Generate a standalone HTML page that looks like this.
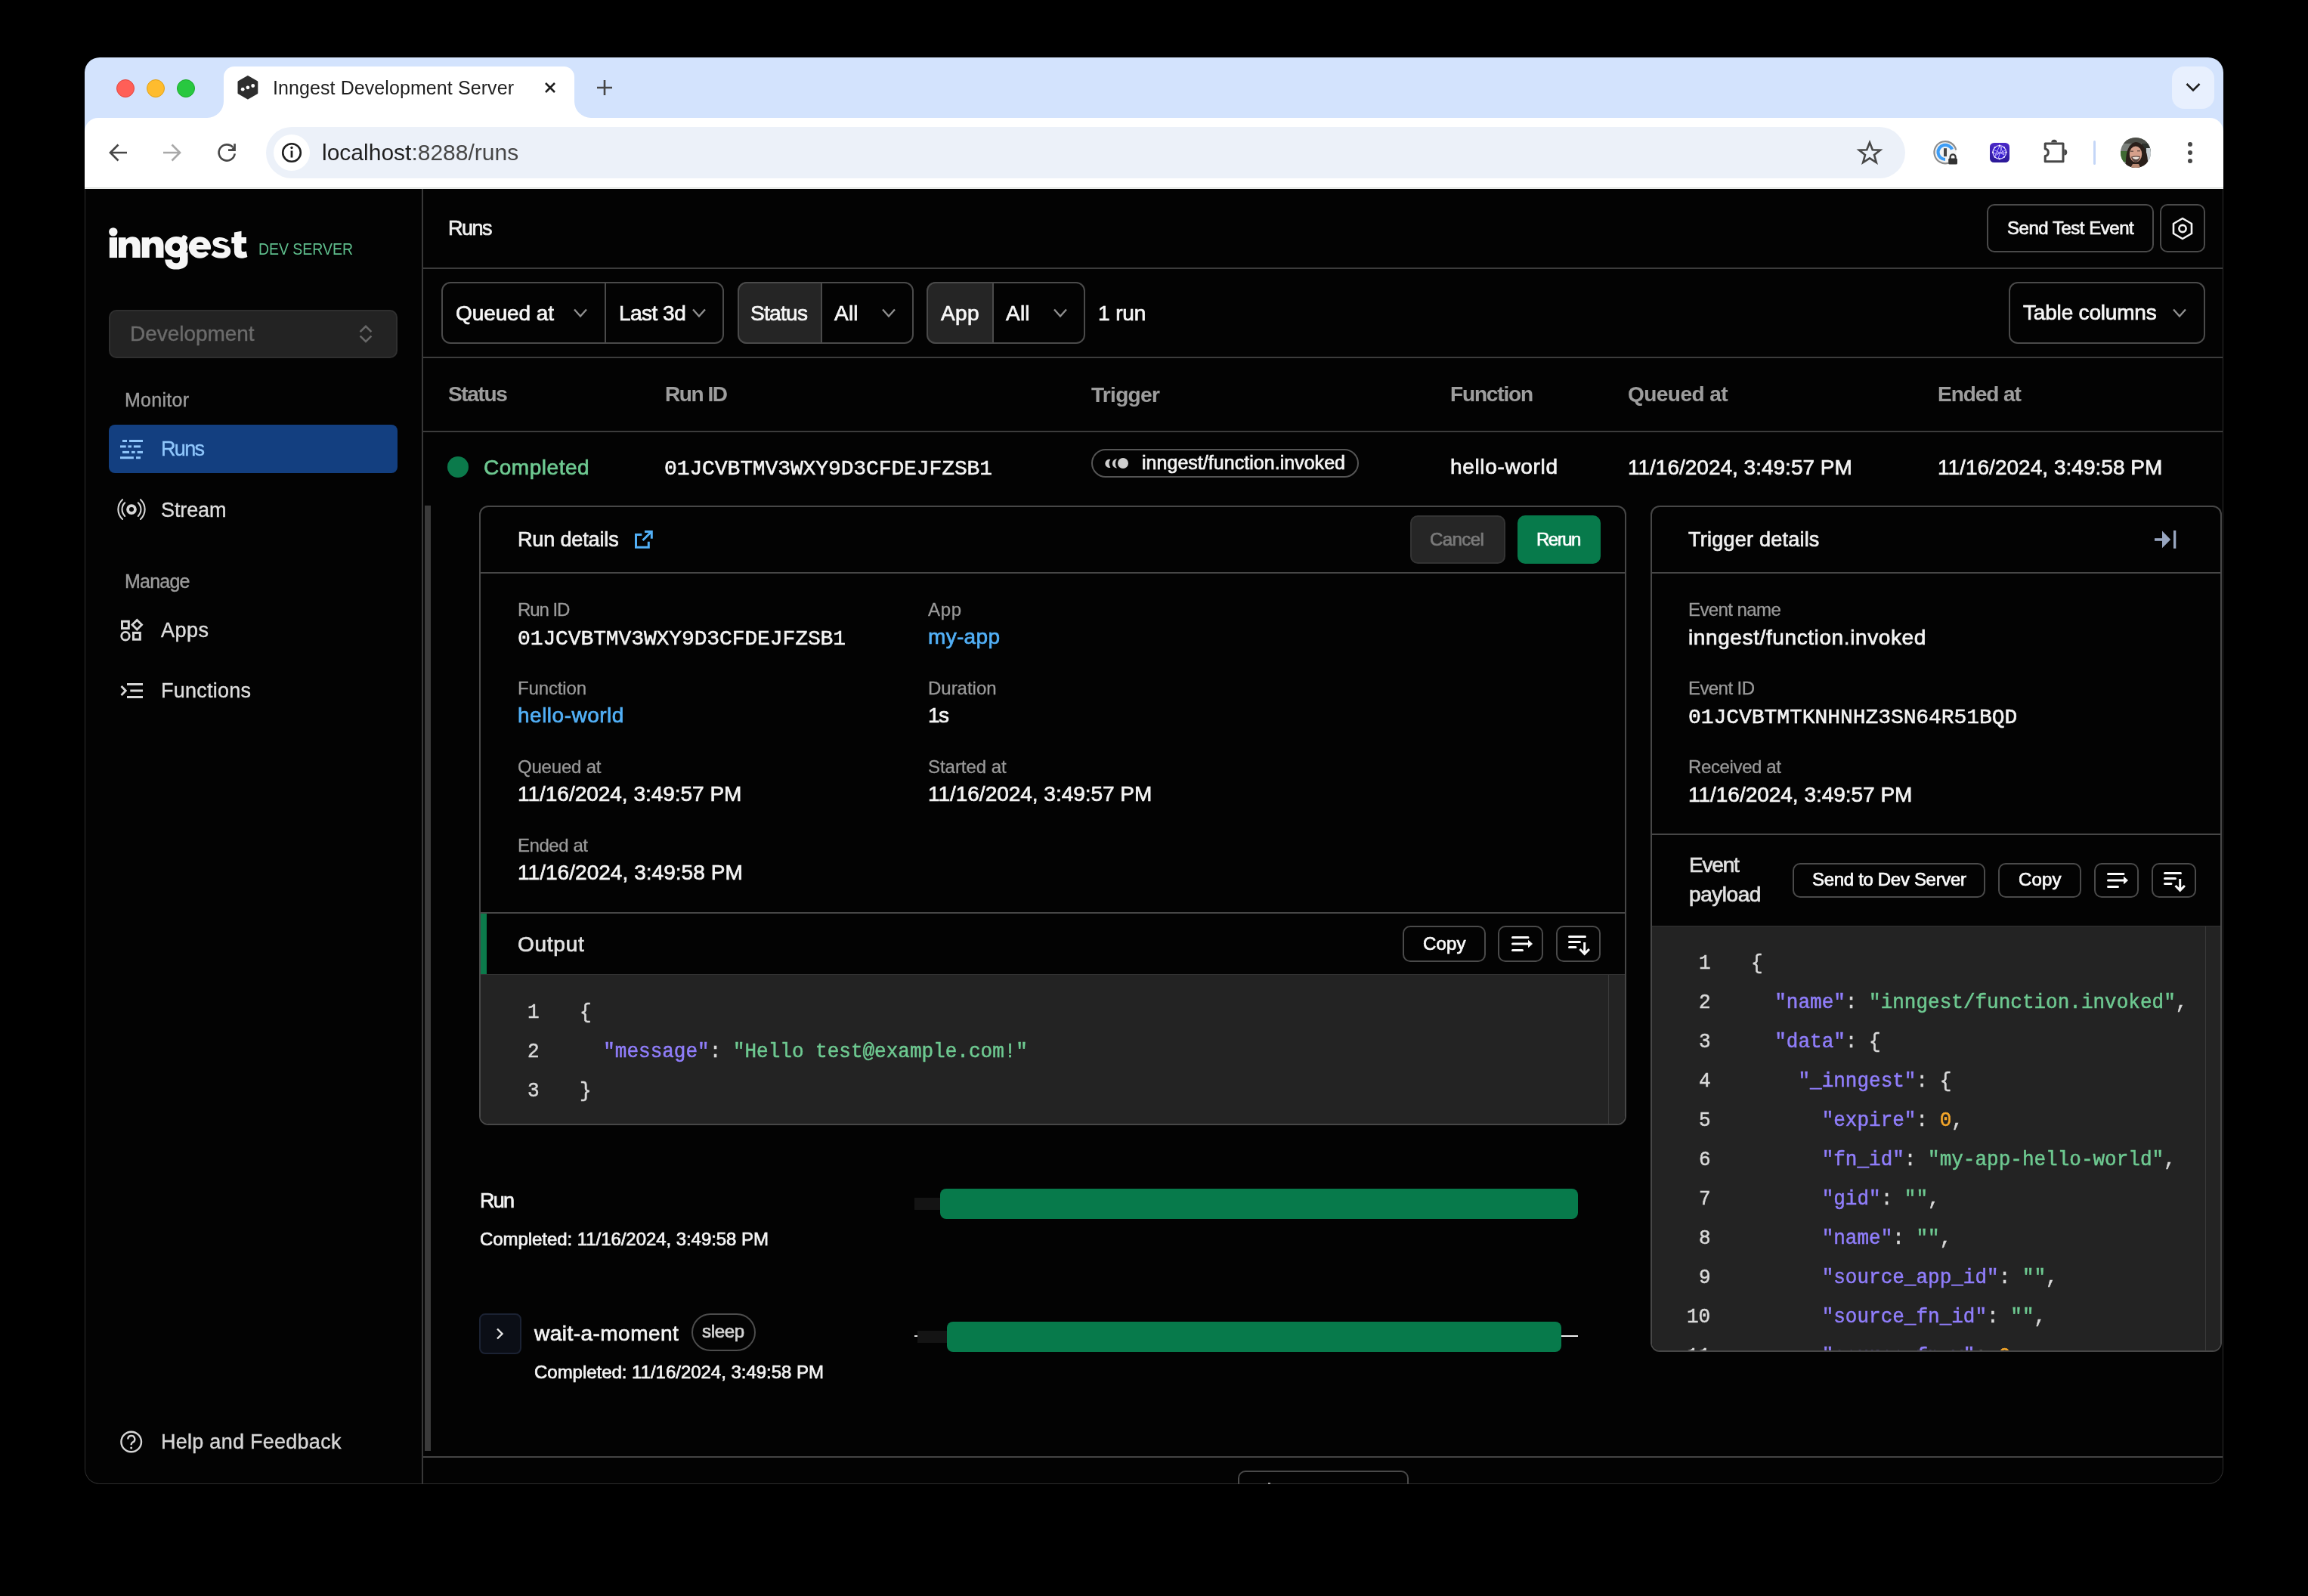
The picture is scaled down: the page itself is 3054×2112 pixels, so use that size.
<!DOCTYPE html>
<html><head><meta charset="utf-8"><title>Inngest Development Server</title>
<style>
html,body{margin:0;padding:0;}
body{width:3054px;height:2112px;background:#000;overflow:hidden;position:relative;font-family:"Liberation Sans",sans-serif;}
.t{position:absolute;white-space:pre;will-change:transform;}
.b{position:absolute;}
</style></head><body>
<div class="b" style="left:112px;top:76px;width:2830px;height:1888px;background:#030303;border-radius:20px;overflow:hidden;"></div>
<div class="b" style="left:112px;top:240px;width:2830px;height:1724px;border:1px solid #2c2c2c;box-sizing:border-box;border-radius:0 0 20px 20px;border-top:none;"></div>
<div class="b" style="left:112px;top:76px;width:2830px;height:114px;background:#d3e3fd;border-radius:20px 20px 0 0;"></div>
<div class="b" style="left:112px;top:156px;width:2830px;height:94px;background:#ffffff;border-radius:18px 18px 0 0;"></div>
<div class="b" style="left:112px;top:248px;width:2830px;height:1px;background:#dcdedc;"></div>
<div class="b" style="left:112px;top:249px;width:2830px;height:1px;background:#eceeec;"></div>
<div class="b" style="left:296px;top:88px;width:464px;height:72px;background:#ffffff;border-radius:14px 14px 0 0;"></div>
<div class="b" style="left:274px;top:134px;width:22px;height:26px;background:#ffffff;"></div>
<div class="b" style="left:230px;top:100px;width:66px;height:56px;background:#d3e3fd;border-radius:0 0 22px 0;"></div>
<div class="b" style="left:760px;top:134px;width:22px;height:26px;background:#ffffff;"></div>
<div class="b" style="left:760px;top:100px;width:66px;height:56px;background:#d3e3fd;border-radius:0 0 0 22px;"></div>
<div class="b" style="left:154px;top:105px;width:24px;height:24px;background:#ff5f57;border:1px solid #e2463f;box-sizing:border-box;border-radius:12px;"></div>
<div class="b" style="left:194px;top:105px;width:24px;height:24px;background:#febc2e;border:1px solid #e1a116;box-sizing:border-box;border-radius:12px;"></div>
<div class="b" style="left:234px;top:105px;width:24px;height:24px;background:#28c840;border:1px solid #1aab29;box-sizing:border-box;border-radius:12px;"></div>
<svg class="b" style="left:310px;top:96px;" width="36" height="40" viewBox="310 96 36 40">
      <polygon points="327.9,101.3 340.1,108.4 340.1,123.2 327.9,130.2 315.7,123.2 315.7,108.4" fill="#2e2e2e" stroke="#2e2e2e" stroke-width="2.4" stroke-linejoin="round"/>
      <circle cx="321.2" cy="118.2" r="2.4" fill="#fff"/><circle cx="327.9" cy="115.8" r="2.4" fill="#fff"/><circle cx="334.7" cy="113.5" r="2.4" fill="#fff"/>
    </svg>
<div class="t" style="left:361.00px;top:103.75px;font-size:25px;line-height:25px;color:#1f1f1f;letter-spacing:0.085px;">Inngest Development Server</div>
<svg class="b" style="left:716px;top:104px;" width="24" height="24" viewBox="716 104 24 24"><path d="M722 110 L734 122 M734 110 L722 122" stroke="#1f1f1f" stroke-width="2.6" stroke-linecap="butt"/></svg>
<svg class="b" style="left:786px;top:102px;" width="28" height="28" viewBox="786 102 28 28"><path d="M800 106 L800 126 M790 116 L810 116" stroke="#474747" stroke-width="2.6"/></svg>
<div class="b" style="left:2874px;top:88px;width:56px;height:56px;background:#e8f0fe;border-radius:16px;"></div>
<svg class="b" style="left:2890px;top:106px;" width="24" height="18" viewBox="2890 106 24 18"><path d="M2893.5 111 L2902 119.5 L2910.5 111" fill="none" stroke="#1f1f1f" stroke-width="2.6"/></svg>
<svg class="b" style="left:140px;top:186px;" width="32" height="32" viewBox="140 186 32 32"><path d="M168 202 L146 202 M156.5 191.5 L146 202 L156.5 212.5" fill="none" stroke="#474747" stroke-width="2.7"/></svg>
<svg class="b" style="left:212px;top:186px;" width="32" height="32" viewBox="212 186 32 32"><path d="M216 202 L238 202 M227.5 191.5 L238 202 L227.5 212.5" fill="none" stroke="#a9a9a9" stroke-width="2.7"/></svg>
<svg class="b" style="left:284px;top:186px;" width="34" height="32" viewBox="284 186 34 32"><path d="M308.2 195 A10.6 10.6 0 1 0 310.7 203.4" fill="none" stroke="#474747" stroke-width="2.6"/><polygon points="302,197.2 306.3,197.2 309.2,194.3 309.2,190.3 311.9,190.3 311.9,199.9 302,199.9" fill="#474747"/></svg>
<div class="b" style="left:352px;top:168px;width:2169px;height:68px;background:#ecf1f9;border-radius:34px;"></div>
<div class="b" style="left:362px;top:178px;width:48px;height:48px;background:#ffffff;border-radius:24px;"></div>
<svg class="b" style="left:370px;top:188px;" width="32" height="28" viewBox="370 188 32 28"><circle cx="386" cy="202" r="11.8" fill="none" stroke="#1f1f1f" stroke-width="2.6"/><path d="M386 199.5 L386 208.5" stroke="#1f1f1f" stroke-width="2.8"/><circle cx="386" cy="195.5" r="1.7" fill="#1f1f1f"/></svg>
<div class="t" style="left:426px;top:186.5px;font-size:30px;line-height:30px;color:#1f1f1f;letter-spacing:0px">localhost<span style="color:#474747">:8288/runs</span></div>
<svg class="b" style="left:2456px;top:184px;" width="36" height="34" viewBox="2456 184 36 34"><polygon points="2474,188.5 2477.8,198.2 2488,198.6 2480,205 2482.8,215 2474,209.3 2465.2,215 2468,205 2460,198.6 2470.2,198.2" fill="none" stroke="#474747" stroke-width="2.6" stroke-linejoin="miter"/></svg>
<svg class="b" style="left:2554px;top:182px;" width="42" height="40" viewBox="2554 182 42 40">
      <circle cx="2574" cy="201.5" r="14.6" fill="#f4f4f4"/>
      <path d="M2578.5 215.6 A14.6 14.6 0 1 1 2588.3 198.5" fill="none" stroke="#8c8c8c" stroke-width="2.2"/>
      <path d="M2574 211 A9.6 9.6 0 1 1 2583 197.8" fill="none" stroke="#3d9df6" stroke-width="4.2"/>
      <rect x="2572" y="196.2" width="4" height="10.8" fill="#474747"/>
      <path d="M2580.6 210.5 L2580.6 207.8 A3.5 3.5 0 0 1 2587.6 207.8 L2587.6 210.5" fill="none" stroke="#333" stroke-width="2.2"/>
      <rect x="2578.2" y="209.6" width="11.8" height="8" rx="1.6" fill="#333"/>
    </svg>
<svg class="b" style="left:2630px;top:186px;" width="32" height="32" viewBox="2630 186 32 32">
      <defs><linearGradient id="pg" x1="0" y1="0" x2="0" y2="1"><stop offset="0" stop-color="#4b28c8"/><stop offset="1" stop-color="#2a1896"/></linearGradient></defs>
      <rect x="2633" y="189" width="26" height="26" rx="5.5" fill="url(#pg)"/>
      <circle cx="2645.8" cy="201.5" r="8.8" fill="#3a20d0" stroke="#d8ccff" stroke-width="1.3"/>
      <path d="M2638 198 L2652 205 L2646 193 L2640 206 L2653 199 M2644 210 L2649 194 M2637.5 203 L2654 202" fill="none" stroke="#c9b8ff" stroke-width="0.9"/>
      <g fill="#ffffff"><circle cx="2645.8" cy="192.7" r="1.1"/><circle cx="2654.6" cy="201.5" r="1.1"/><circle cx="2645.8" cy="210.3" r="1.1"/><circle cx="2637" cy="201.5" r="1.1"/><circle cx="2652" cy="195.3" r="1"/><circle cx="2639.6" cy="207.7" r="1"/><circle cx="2652" cy="207.7" r="1"/><circle cx="2639.6" cy="195.3" r="1"/></g>
    </svg>
<svg class="b" style="left:2700px;top:180px;" width="40" height="40" viewBox="2700 180 40 40">
      <path d="M2706.2 190 L2730 190 L2730 213.8 L2706.2 213.8 L2706.2 206.5 A4.8 4.8 0 0 0 2706.2 197 Z" fill="none" stroke="#474747" stroke-width="3" stroke-linejoin="round"/>
      <path d="M2714.2 188.6 A3.9 3.9 0 0 1 2722 188.6 Z" fill="#474747"/>
      <path d="M2731.4 197.6 A3.9 3.9 0 0 1 2731.4 205.4 Z" fill="#474747"/>
    </svg>
<div class="b" style="left:2770px;top:186px;width:3px;height:32px;background:#c4d6f7;border-radius:1.5px;"></div>
<svg class="b" style="left:2804px;top:180px;" width="44" height="44" viewBox="2804 180 44 44">
      <defs><clipPath id="avc"><circle cx="2826" cy="202" r="20"/></clipPath></defs>
      <g clip-path="url(#avc)">
        <rect x="2804" y="180" width="44" height="44" fill="#7a7f7a"/>
        <rect x="2804" y="180" width="44" height="10" fill="#4c4e48"/>
        <rect x="2834" y="190" width="12" height="12" fill="#2e332e"/>
        <rect x="2804" y="200" width="12" height="14" fill="#3f6a33"/>
        <rect x="2814" y="204" width="3" height="10" fill="#dfe6ea"/>
        <rect x="2840" y="196" width="6" height="20" fill="#c9d0d4"/>
        <path d="M2813 222 C2812 205 2815 190 2826 188 C2837 189 2841 200 2842 213 L2841 222 Z" fill="#2a1f1a"/>
        <ellipse cx="2826" cy="204" rx="8.2" ry="10.5" fill="#d6a08b"/>
        <path d="M2822 217 L2830 217 L2833 224 L2818 224 Z" fill="#b98a73"/>
        <rect x="2819" y="199.5" width="4" height="1.4" fill="#6a5048"/>
        <rect x="2828" y="199" width="4" height="1.4" fill="#6a5048"/>
        <path d="M2820 207.5 Q2826.5 205.5 2832 207 Q2831 214 2826 214.5 Q2821 213.5 2820 207.5 Z" fill="#5a4640"/>
        <path d="M2821.5 208.2 Q2826.5 207 2830.8 208 Q2829.8 210.8 2826 211 Q2822.5 210.5 2821.5 208.2 Z" fill="#eee4dc"/>
      </g>
    </svg>
<div class="b" style="left:2895px;top:188px;width:6px;height:6px;background:#474747;border-radius:3px;"></div>
<div class="b" style="left:2895px;top:199px;width:6px;height:6px;background:#474747;border-radius:3px;"></div>
<div class="b" style="left:2895px;top:210px;width:6px;height:6px;background:#474747;border-radius:3px;"></div>
<div class="b" style="left:558px;top:250px;width:2px;height:1714px;background:#383838;"></div>
<svg class="b" style="left:138px;top:296px;" width="194" height="64" viewBox="138 296 194 64"><g fill="#f6f6f6">
      <rect x="144.8" y="314.2" width="10.2" height="26.9"/>
      <circle cx="149.8" cy="306.9" r="5.7"/>
      <path d="M156.9 341.1 L156.9 314.2 L166.5 314.2 L166.5 317.2 C168.70000000000002 314.6 171.70000000000002 313.3 175.3 313.3 C181.9 313.3 185.70000000000002 317.8 185.70000000000002 325 L185.70000000000002 341.1 L175.3 341.1 L175.3 327 C175.3 323.6 173.9 321.8 171.5 321.8 C168.9 321.8 166.9 323.8 166.9 327.2 L166.9 341.1 Z"/>
      <path d="M187.7 341.1 L187.7 314.2 L197.29999999999998 314.2 L197.29999999999998 317.2 C199.5 314.6 202.5 313.3 206.1 313.3 C212.7 313.3 216.5 317.8 216.5 325 L216.5 341.1 L206.1 341.1 L206.1 327 C206.1 323.6 204.7 321.8 202.29999999999998 321.8 C199.7 321.8 197.7 323.8 197.7 327.2 L197.7 341.1 Z"/>
      <path fill-rule="evenodd" d="M218 326.8 A15.2 13.9 0 1 0 248.4 326.8 A15.2 13.9 0 1 0 218 326.8 Z M227.7 326.7 A5.2 5.2 0 1 0 238.1 326.7 A5.2 5.2 0 1 0 227.7 326.7 Z"/>
      <path d="M239 316 L242.2 311.3 C244.5 310.8 247 312 248.4 314.5 L245.5 319.5 Z"/>
      <path d="M238 334 L248.5 334 L248.5 346 C248.5 352.6 242.5 356.6 233.2 356.6 C224.5 356.6 218.8 352.6 218.2 343.4 L227.4 343.4 C227.8 346.6 230.2 348.3 233 348.3 C236.2 348.3 238 346.3 238 343 Z"/>
      <path fill-rule="evenodd" d="M249.8 327.5 A14.6 14.3 0 1 0 279.0 327.5 A14.6 14.3 0 1 0 249.8 327.5 Z M260 323.9 C260.5 321.6 262.3 320.6 264.6 320.6 C267 320.6 268.8 321.6 269.4 323.9 Z"/>
      <path d="M259.8 330.3 L282 330.3 L282 339.5 L277.6 337.6 L272.3 332.5 C270.2 333.6 268 334 265.5 334 C262.5 334 260.5 332.6 259.8 330.3 Z" fill="#030303"/>
      <path d="M302.5 318.6 C298.8 315.2 293.5 313.8 290 314 C284.5 314.3 281.2 317.2 281.5 321.3 C281.9 326 286 327.2 292 328.5 C296.5 329.5 297.3 330.3 297.2 331.9 C297 333.8 295 334.6 292.4 334.6 C289 334.6 285.5 333.2 283.4 331.2 L279.5 337.2 C282.8 340.3 287.6 341.8 292.6 341.8 C300.5 341.8 305.3 338.2 305.2 332.2 C305.1 326.8 301.2 325.2 295 323.8 C290.5 322.8 289.6 322.1 289.6 320.8 C289.6 319.6 290.8 318.8 292.8 318.8 C295.2 318.8 297.6 319.8 299 321 Z"/>
      <path d="M309.9 307.4 L319.5 305.8 L319.5 314 L326 314 L326 322 L319.5 322 L319.5 330.5 C319.5 332.2 320.2 333.1 321.8 333.1 C323.2 333.1 324.5 332.8 325.8 332.2 L327.4 340 C324.8 341.2 322.3 341.8 319.2 341.8 C313.3 341.8 309.9 338.6 309.9 332.6 L309.9 322 L306.3 322 L306.3 314 L309.9 314 Z"/>
    </g></svg>
<div class="t" style="left:341.70px;top:321.43px;font-size:19.5px;line-height:19.5px;color:#5fbf8d;letter-spacing:-0.043px;transform:scaleY(1.13);transform-origin:0 16.57px;">DEV SERVER</div>
<div class="b" style="left:144px;top:410px;width:382px;height:64px;background:#232323;border:2px solid #2f2f2f;box-sizing:border-box;border-radius:10px;"></div>
<div class="t" style="left:171.50px;top:428.20px;font-size:28px;line-height:28px;color:#6b6b6b;letter-spacing:-0.042px;-webkit-text-stroke:0.4px currentColor;">Development</div>
<svg class="b" style="left:472px;top:426px;" width="24" height="32" viewBox="472 426 24 32"><path d="M476.6 439.2 L484 431.8 L491.4 439.2 M476.6 444.6 L484 452 L491.4 444.6" fill="none" stroke="#686868" stroke-width="2.6"/></svg>
<div class="t" style="left:165.00px;top:517.35px;font-size:25px;line-height:25px;color:#9c9c9c;letter-spacing:0.271px;-webkit-text-stroke:0.4px currentColor;">Monitor</div>
<div class="b" style="left:144px;top:562px;width:382px;height:64px;background:#133f80;border-radius:8px;"></div>
<svg class="b" style="left:150px;top:575px;" width="50" height="40" viewBox="150 575 50 40"><rect x="162" y="582" width="6.0" height="3" fill="#8fc6fb"/><rect x="171" y="582" width="18.0" height="3" fill="#8fc6fb"/><rect x="159" y="589.4" width="7.7" height="3" fill="#8fc6fb"/><rect x="169.4" y="589.4" width="4.6" height="3" fill="#8fc6fb"/><rect x="176.9" y="589.4" width="9.1" height="3" fill="#8fc6fb"/><rect x="162" y="596.9" width="9.0" height="3" fill="#8fc6fb"/><rect x="174" y="596.9" width="4.7" height="3" fill="#8fc6fb"/><rect x="181.6" y="596.9" width="7.4" height="3" fill="#8fc6fb"/><rect x="159" y="604.2" width="17.9" height="3" fill="#8fc6fb"/><rect x="180" y="604.2" width="6.0" height="3" fill="#8fc6fb"/></svg>
<div class="t" style="left:213.00px;top:581.35px;font-size:27px;line-height:27px;color:#8fc6fb;letter-spacing:-1.682px;-webkit-text-stroke:0.4px currentColor;">Runs</div>
<svg class="b" style="left:150px;top:655px;" width="50" height="40" viewBox="150 655 50 40">
      <circle cx="174" cy="674.1" r="4.95" fill="none" stroke="#d6d6d6" stroke-width="3.8"/>
      <path d="M165.2 665.3 A12.4 12.4 0 0 0 165.2 682.9 M182.8 665.3 A12.4 12.4 0 0 1 182.8 682.9" fill="none" stroke="#d6d6d6" stroke-width="2.1" stroke-linecap="round"/>
      <path d="M162 661.2 A17.6 17.6 0 0 0 162 687 M186 661.2 A17.6 17.6 0 0 1 186 687" fill="none" stroke="#d6d6d6" stroke-width="2.1" stroke-linecap="round"/>
    </svg>
<div class="t" style="left:213.00px;top:661.75px;font-size:27px;line-height:27px;color:#dedede;letter-spacing:-0.115px;-webkit-text-stroke:0.4px currentColor;">Stream</div>
<div class="t" style="left:165.00px;top:757.25px;font-size:25px;line-height:25px;color:#9c9c9c;letter-spacing:-0.775px;-webkit-text-stroke:0.4px currentColor;">Manage</div>
<svg class="b" style="left:150px;top:812px;" width="50" height="44" viewBox="150 812 50 44">
      <rect x="161.5" y="822.3" width="8.8" height="9.2" fill="none" stroke="#d8d8d8" stroke-width="3"/>
      <polygon points="181.3,820.5 187.6,826.8 181.3,833.1 175,826.8" fill="none" stroke="#d8d8d8" stroke-width="2.8"/>
      <circle cx="166" cy="841.7" r="5.3" fill="none" stroke="#d8d8d8" stroke-width="2.8"/>
      <rect x="176.5" y="837.4" width="8.8" height="8.8" fill="none" stroke="#d8d8d8" stroke-width="3"/>
    </svg>
<div class="t" style="left:213.00px;top:821.05px;font-size:27px;line-height:27px;color:#dedede;letter-spacing:0.480px;-webkit-text-stroke:0.4px currentColor;">Apps</div>
<svg class="b" style="left:150px;top:895px;" width="50" height="40" viewBox="150 895 50 40">
      <path d="M168 905.5 L189 905.5 M172.3 914 L189 914 M168 922.5 L189 922.5" stroke="#d8d8d8" stroke-width="3"/>
      <path d="M160.5 908 L166.3 914 L160.5 920" fill="none" stroke="#d8d8d8" stroke-width="2.8"/>
    </svg>
<div class="t" style="left:213.00px;top:900.55px;font-size:27px;line-height:27px;color:#dedede;letter-spacing:0.244px;-webkit-text-stroke:0.4px currentColor;">Functions</div>
<svg class="b" style="left:155px;top:1890px;" width="38" height="38" viewBox="155 1890 38 38">
      <circle cx="173.7" cy="1908" r="13.3" fill="none" stroke="#d4d4d4" stroke-width="2.4"/>
      <path d="M169.3 1904.5 A4.5 4.5 0 1 1 175.5 1908.6 C174.2 1909.3 173.7 1910 173.7 1911.5 L173.7 1912.3" fill="none" stroke="#d4d4d4" stroke-width="2.4"/>
      <circle cx="173.7" cy="1916" r="1.5" fill="#d4d4d4"/>
    </svg>
<div class="t" style="left:213.40px;top:1895.05px;font-size:27px;line-height:27px;color:#d6d6d6;letter-spacing:0.265px;-webkit-text-stroke:0.4px currentColor;">Help and Feedback</div>
<div class="t" style="left:593.00px;top:289.45px;font-size:27px;line-height:27px;color:#f0f0f0;letter-spacing:-1.515px;-webkit-text-stroke:0.7px currentColor;">Runs</div>
<div class="b" style="left:2629px;top:270px;width:221px;height:64px;border:2px solid #4a4a4a;box-sizing:border-box;border-radius:10px;"></div>
<div class="t" style="left:2656.00px;top:290.00px;font-size:24px;line-height:24px;color:#f6f6f6;letter-spacing:-0.476px;-webkit-text-stroke:0.7px currentColor;">Send Test Event</div>
<div class="b" style="left:2858px;top:270px;width:60px;height:64px;border:2px solid #4a4a4a;box-sizing:border-box;border-radius:10px;"></div>
<svg class="b" style="left:2872px;top:284px;" width="32" height="36" viewBox="2872 284 32 36"><polygon points="2888,289 2900,296 2900,309 2888,316 2876,309 2876,296" fill="none" stroke="#f4f4f4" stroke-width="2.6" stroke-linejoin="round"/><circle cx="2888" cy="302.5" r="4.6" fill="none" stroke="#f4f4f4" stroke-width="2.6"/></svg>
<div class="b" style="left:560px;top:354px;width:2381px;height:2px;background:#3c3c3c;"></div>
<div class="b" style="left:975.6px;top:372.5px;width:111.39999999999998px;height:82.5px;background:#252525;border-radius:12px 0 0 12px;"></div>
<div class="b" style="left:1226.4px;top:372.5px;width:87.59999999999991px;height:82.5px;background:#252525;border-radius:12px 0 0 12px;"></div>
<div class="b" style="left:584px;top:372.5px;width:374px;height:82.5px;border:2px solid #4a4a4a;box-sizing:border-box;border-radius:12px;"></div>
<div class="b" style="left:800px;top:373px;width:2px;height:82px;background:#4a4a4a;"></div>
<div class="b" style="left:975.6px;top:372.5px;width:233.89999999999998px;height:82.5px;border:2px solid #4a4a4a;box-sizing:border-box;border-radius:12px;"></div>
<div class="b" style="left:1086px;top:373px;width:2px;height:82px;background:#4a4a4a;"></div>
<div class="b" style="left:1226.4px;top:372.5px;width:209.5999999999999px;height:82.5px;border:2px solid #4a4a4a;box-sizing:border-box;border-radius:12px;"></div>
<div class="b" style="left:1313px;top:373px;width:2px;height:82px;background:#4a4a4a;"></div>
<div class="t" style="left:602.70px;top:400.90px;font-size:28px;line-height:28px;color:#f6f6f6;letter-spacing:-0.095px;-webkit-text-stroke:0.7px currentColor;">Queued at</div>
<svg class="b" style="left:756px;top:405px;" width="24" height="18" viewBox="756 405 24 18"><path d="M760 409.5 L768 418.5 L776 409.5" fill="none" stroke="#8e8e8e" stroke-width="2.4"/></svg>
<div class="t" style="left:819.00px;top:400.90px;font-size:28px;line-height:28px;color:#f6f6f6;letter-spacing:-0.523px;-webkit-text-stroke:0.7px currentColor;">Last 3d</div>
<svg class="b" style="left:913px;top:405px;" width="24" height="18" viewBox="913 405 24 18"><path d="M917 409.5 L925 418.5 L933 409.5" fill="none" stroke="#8e8e8e" stroke-width="2.4"/></svg>
<div class="t" style="left:993.00px;top:400.90px;font-size:28px;line-height:28px;color:#f6f6f6;letter-spacing:-0.676px;-webkit-text-stroke:0.7px currentColor;">Status</div>
<div class="t" style="left:1104.00px;top:400.90px;font-size:28px;line-height:28px;color:#f6f6f6;letter-spacing:0.210px;-webkit-text-stroke:0.7px currentColor;">All</div>
<svg class="b" style="left:1164px;top:405px;" width="24" height="18" viewBox="1164 405 24 18"><path d="M1168 409.5 L1176 418.5 L1184 409.5" fill="none" stroke="#8e8e8e" stroke-width="2.4"/></svg>
<div class="t" style="left:1244.60px;top:400.90px;font-size:28px;line-height:28px;color:#f6f6f6;letter-spacing:0.430px;-webkit-text-stroke:0.7px currentColor;">App</div>
<div class="t" style="left:1331.00px;top:400.90px;font-size:28px;line-height:28px;color:#f6f6f6;letter-spacing:0.210px;-webkit-text-stroke:0.7px currentColor;">All</div>
<svg class="b" style="left:1391px;top:405px;" width="24" height="18" viewBox="1391 405 24 18"><path d="M1395 409.5 L1403 418.5 L1411 409.5" fill="none" stroke="#8e8e8e" stroke-width="2.4"/></svg>
<div class="t" style="left:1452.60px;top:400.90px;font-size:28px;line-height:28px;color:#f6f6f6;letter-spacing:-0.110px;-webkit-text-stroke:0.7px currentColor;">1 run</div>
<div class="b" style="left:2658.4px;top:372.8px;width:259.2999999999997px;height:82.69999999999999px;border:2px solid #4a4a4a;box-sizing:border-box;border-radius:12px;"></div>
<div class="t" style="left:2676.60px;top:400.20px;font-size:28px;line-height:28px;color:#f6f6f6;letter-spacing:-0.185px;-webkit-text-stroke:0.7px currentColor;">Table columns</div>
<svg class="b" style="left:2872px;top:405px;" width="24" height="18" viewBox="2872 405 24 18"><path d="M2876 409.5 L2884 418.5 L2892 409.5" fill="none" stroke="#8e8e8e" stroke-width="2.4"/></svg>
<div class="b" style="left:560px;top:472px;width:2381px;height:2px;background:#3c3c3c;"></div>
<div class="t" style="left:593.00px;top:508.20px;font-size:28px;line-height:28px;color:#9d9d9d;font-weight:700;letter-spacing:-1.348px;-webkit-text-stroke:0.1px currentColor;">Status</div>
<div class="t" style="left:879.60px;top:508.20px;font-size:28px;line-height:28px;color:#9d9d9d;font-weight:700;letter-spacing:-1.432px;-webkit-text-stroke:0.1px currentColor;">Run ID</div>
<div class="t" style="left:1444.40px;top:508.90px;font-size:28px;line-height:28px;color:#9d9d9d;font-weight:700;letter-spacing:-0.687px;-webkit-text-stroke:0.1px currentColor;">Trigger</div>
<div class="t" style="left:1919.00px;top:508.20px;font-size:28px;line-height:28px;color:#9d9d9d;font-weight:700;letter-spacing:-1.166px;-webkit-text-stroke:0.1px currentColor;">Function</div>
<div class="t" style="left:2154.00px;top:508.20px;font-size:28px;line-height:28px;color:#9d9d9d;font-weight:700;letter-spacing:-0.528px;-webkit-text-stroke:0.1px currentColor;">Queued at</div>
<div class="t" style="left:2564.00px;top:508.20px;font-size:28px;line-height:28px;color:#9d9d9d;font-weight:700;letter-spacing:-1.043px;-webkit-text-stroke:0.1px currentColor;">Ended at</div>
<div class="b" style="left:560px;top:570px;width:2381px;height:2px;background:#3c3c3c;"></div>
<div class="b" style="left:592px;top:604px;width:28px;height:28px;background:#0b7a4b;border-radius:14px;"></div>
<div class="t" style="left:640.40px;top:604.60px;font-size:28px;line-height:28px;color:#6ec991;letter-spacing:0.527px;-webkit-text-stroke:0.7px currentColor;">Completed</div>
<div class="t" style="left:879.00px;top:606.72px;font-size:28px;line-height:28px;color:#f4f4f4;font-family:'Liberation Mono', monospace;letter-spacing:-0.112px;-webkit-text-stroke:0.55px currentColor;">01JCVBTMV3WXY9D3CFDEJFZSB1</div>
<div class="b" style="left:1444px;top:594px;width:354px;height:38px;border:2px solid #555555;box-sizing:border-box;border-radius:19px;"></div>
<svg class="b" style="left:1458px;top:602px;" width="38" height="22" viewBox="1458 602 38 22">
      <path d="M1469.4 608 A5.6 5.6 0 1 0 1469.4 618.8 A8.5 8.5 0 0 1 1469.4 608 Z" fill="#cfcfcf"/>
      <path d="M1478 607.3 A6 6 0 1 0 1478 619.5 A9.5 9.5 0 0 1 1478 607.3 Z" fill="#cfcfcf"/>
      <circle cx="1486" cy="613" r="7" fill="#cfcfcf"/>
    </svg>
<div class="t" style="left:1510.90px;top:600.15px;font-size:25px;line-height:25px;color:#f4f4f4;letter-spacing:0.033px;-webkit-text-stroke:0.7px currentColor;">inngest/function.invoked</div>
<div class="t" style="left:1919.00px;top:603.90px;font-size:28px;line-height:28px;color:#f4f4f4;letter-spacing:0.662px;-webkit-text-stroke:0.7px currentColor;">hello-world</div>
<div class="t" style="left:2154.00px;top:605.20px;font-size:28px;line-height:28px;color:#f4f4f4;-webkit-text-stroke:0.7px currentColor;">11/16/2024, 3:49:57 PM</div>
<div class="t" style="left:2564.00px;top:605.20px;font-size:28px;line-height:28px;color:#f4f4f4;letter-spacing:0.024px;-webkit-text-stroke:0.7px currentColor;">11/16/2024, 3:49:58 PM</div>
<div class="b" style="left:562px;top:669px;width:8px;height:1251px;background:#3a3a3a;"></div>
<div class="b" style="left:560px;top:1927px;width:2381px;height:2px;background:#444444;"></div>
<div class="b" style="left:1637.6px;top:1945.6px;width:226.4000000000001px;height:18.40000000000009px;border:2px solid #4a4a4a;box-sizing:border-box;border-radius:10px 10px 0 0;border-bottom:none;"></div>
<div class="b" style="left:1678px;top:1962px;width:3px;height:2px;background:#9a9a9a;"></div>
<div class="b" style="left:634px;top:669px;width:1518px;height:820px;border:2px solid #474747;box-sizing:border-box;border-radius:12px;"></div>
<div class="t" style="left:685.30px;top:700.75px;font-size:27px;line-height:27px;color:#f0f0f0;letter-spacing:-0.144px;-webkit-text-stroke:0.7px currentColor;">Run details</div>
<svg class="b" style="left:836px;top:698px;" width="32" height="32" viewBox="836 698 32 32">
      <path d="M849.3 707.5 L841.5 707.5 L841.5 724.3 L858.3 724.3 L858.3 716.8" fill="none" stroke="#52b0f7" stroke-width="3"/>
      <path d="M850.5 715 L862 703.5 M853 703.5 L862.3 703.5 L862.3 712.8" fill="none" stroke="#52b0f7" stroke-width="3"/></svg>
<div class="b" style="left:1865.5px;top:682px;width:126.0px;height:63.5px;background:#262626;border:2px solid #343434;box-sizing:border-box;border-radius:10px;"></div>
<div class="t" style="left:1892.00px;top:701.60px;font-size:24px;line-height:24px;color:#7a7a7a;letter-spacing:-0.552px;-webkit-text-stroke:0.7px currentColor;">Cancel</div>
<div class="b" style="left:2008px;top:682px;width:110px;height:63.5px;background:#077a4b;border-radius:10px;"></div>
<div class="t" style="left:2033.00px;top:701.60px;font-size:24px;line-height:24px;color:#ffffff;letter-spacing:-1.475px;-webkit-text-stroke:0.6px currentColor;">Rerun</div>
<div class="b" style="left:636px;top:757px;width:1514px;height:2px;background:#474747;"></div>
<div class="t" style="left:684.60px;top:795.10px;font-size:24px;line-height:24px;color:#9a9a9a;letter-spacing:-1.048px;-webkit-text-stroke:0.3px currentColor;">Run ID</div>
<div class="t" style="left:1228.40px;top:795.10px;font-size:24px;line-height:24px;color:#9a9a9a;letter-spacing:0.640px;-webkit-text-stroke:0.3px currentColor;">App</div>
<div class="t" style="left:684.60px;top:831.72px;font-size:28px;line-height:28px;color:#f4f4f4;font-family:'Liberation Mono', monospace;letter-spacing:-0.112px;-webkit-text-stroke:0.55px currentColor;">01JCVBTMV3WXY9D3CFDEJFZSB1</div>
<div class="t" style="left:1228.40px;top:829.20px;font-size:28px;line-height:28px;color:#52b0f7;letter-spacing:0.324px;-webkit-text-stroke:0.7px currentColor;">my-app</div>
<div class="t" style="left:684.60px;top:899.00px;font-size:24px;line-height:24px;color:#9a9a9a;letter-spacing:-0.149px;-webkit-text-stroke:0.3px currentColor;">Function</div>
<div class="t" style="left:1228.40px;top:899.00px;font-size:24px;line-height:24px;color:#9a9a9a;letter-spacing:-0.017px;-webkit-text-stroke:0.3px currentColor;">Duration</div>
<div class="t" style="left:684.60px;top:933.20px;font-size:28px;line-height:28px;color:#52b0f7;letter-spacing:0.502px;-webkit-text-stroke:0.7px currentColor;">hello-world</div>
<div class="t" style="left:1228.40px;top:933.20px;font-size:28px;line-height:28px;color:#f4f4f4;letter-spacing:-1.540px;-webkit-text-stroke:0.7px currentColor;">1s</div>
<div class="t" style="left:684.60px;top:1003.00px;font-size:24px;line-height:24px;color:#9a9a9a;letter-spacing:-0.197px;-webkit-text-stroke:0.3px currentColor;">Queued at</div>
<div class="t" style="left:1228.40px;top:1003.00px;font-size:24px;line-height:24px;color:#9a9a9a;letter-spacing:-0.049px;-webkit-text-stroke:0.3px currentColor;">Started at</div>
<div class="t" style="left:684.60px;top:1037.20px;font-size:28px;line-height:28px;color:#f4f4f4;letter-spacing:-0.019px;-webkit-text-stroke:0.7px currentColor;">11/16/2024, 3:49:57 PM</div>
<div class="t" style="left:1228.40px;top:1037.20px;font-size:28px;line-height:28px;color:#f4f4f4;letter-spacing:-0.024px;-webkit-text-stroke:0.7px currentColor;">11/16/2024, 3:49:57 PM</div>
<div class="t" style="left:684.60px;top:1107.00px;font-size:24px;line-height:24px;color:#9a9a9a;letter-spacing:-0.446px;-webkit-text-stroke:0.3px currentColor;">Ended at</div>
<div class="t" style="left:684.60px;top:1141.20px;font-size:28px;line-height:28px;color:#f4f4f4;letter-spacing:0.043px;-webkit-text-stroke:0.7px currentColor;">11/16/2024, 3:49:58 PM</div>
<div class="b" style="left:636px;top:1206.5px;width:1514px;height:2.0px;background:#474747;"></div>
<div class="b" style="left:635.6px;top:1208.5px;width:8.0px;height:80.5px;background:#0b7a4b;"></div>
<div class="t" style="left:684.80px;top:1235.50px;font-size:28px;line-height:28px;color:#e2e2e2;letter-spacing:0.740px;-webkit-text-stroke:0.7px currentColor;">Output</div>
<div class="b" style="left:1856px;top:1225px;width:110px;height:48px;border:2px solid #4a4a4a;box-sizing:border-box;border-radius:10px;"></div>
<div class="t" style="left:1882.50px;top:1237.20px;font-size:24px;line-height:24px;color:#fafafa;letter-spacing:0.120px;-webkit-text-stroke:0.7px currentColor;">Copy</div>
<div class="b" style="left:1982px;top:1225px;width:60px;height:48px;border:2px solid #4a4a4a;box-sizing:border-box;border-radius:10px;"></div>
<svg class="b" style="left:1982px;top:1225px;" width="60" height="48" viewBox="1982 1225 60 48"><g transform="translate(0,0)">
      <path d="M2001.5 1240.4 L2022 1240.4 M2001.5 1249 L2023 1249 M2001.5 1257.6 L2014.5 1257.6" stroke="#fafafa" stroke-width="3" stroke-linecap="round"/>
      <path d="M2022.5 1244.5 L2027.5 1249 L2022.5 1253.5 Z" fill="#fafafa" stroke="#fafafa" stroke-width="1" stroke-linejoin="round"/></g></svg>
<div class="b" style="left:2058.5px;top:1225px;width:59.0px;height:48px;border:2px solid #4a4a4a;box-sizing:border-box;border-radius:10px;"></div>
<svg class="b" style="left:2058px;top:1225px;" width="60" height="48" viewBox="2058 1225 60 48"><g transform="translate(-0.5,0)">
      <path d="M2077 1239.5 L2098 1239.5 M2077 1246.6 L2091 1246.6 M2077 1253.4 L2085.5 1253.4" stroke="#fafafa" stroke-width="3" stroke-linecap="round"/>
      <path d="M2097.2 1247 L2097.2 1262 M2091 1256 L2097.2 1262.3 L2103.4 1256" fill="none" stroke="#fafafa" stroke-width="3"/></g></svg>
<div class="b" style="left:636px;top:1288.5px;width:1514px;height:1.5px;background:#333333;"></div>
<div class="b" style="left:636px;top:1290px;width:1514px;height:197px;background:#232323;border-radius:0 0 10px 10px;"></div>
<div class="b" style="left:2128px;top:1290px;width:1.199999999999818px;height:197px;background:#3a3a3a;"></div>
<div class="t" style="left:697.80px;top:1326.94px;font-size:26px;line-height:26px;color:#d9d9d9;font-family:'Liberation Mono', monospace;transform:scaleY(1.09);transform-origin:0 19.76px;-webkit-text-stroke:0.5px currentColor;">1</div>
<div class="t" style="left:766.5px;top:1326.94px;font-family:'Liberation Mono',monospace;font-size:26px;line-height:26px;transform:scaleY(1.09);transform-origin:0 19.76px;-webkit-text-stroke:0.5px currentColor;"><span style="color:#d9d9d9">{</span></div>
<div class="t" style="left:697.80px;top:1378.94px;font-size:26px;line-height:26px;color:#d9d9d9;font-family:'Liberation Mono', monospace;transform:scaleY(1.09);transform-origin:0 19.76px;-webkit-text-stroke:0.5px currentColor;">2</div>
<div class="t" style="left:766.5px;top:1378.94px;font-family:'Liberation Mono',monospace;font-size:26px;line-height:26px;transform:scaleY(1.09);transform-origin:0 19.76px;-webkit-text-stroke:0.5px currentColor;"><span style="color:#d9d9d9">  </span><span style="color:#907efb">&quot;message&quot;</span><span style="color:#d9d9d9">: </span><span style="color:#6ec991">&quot;Hello test@example.com!&quot;</span></div>
<div class="t" style="left:697.80px;top:1430.94px;font-size:26px;line-height:26px;color:#d9d9d9;font-family:'Liberation Mono', monospace;transform:scaleY(1.09);transform-origin:0 19.76px;-webkit-text-stroke:0.5px currentColor;">3</div>
<div class="t" style="left:766.5px;top:1430.94px;font-family:'Liberation Mono',monospace;font-size:26px;line-height:26px;transform:scaleY(1.09);transform-origin:0 19.76px;-webkit-text-stroke:0.5px currentColor;"><span style="color:#d9d9d9">}</span></div>
<div class="t" style="left:635.00px;top:1576.35px;font-size:27px;line-height:27px;color:#f4f4f4;letter-spacing:-1.773px;-webkit-text-stroke:0.7px currentColor;">Run</div>
<div class="t" style="left:635.00px;top:1628.30px;font-size:24px;line-height:24px;color:#f4f4f4;letter-spacing:-0.059px;-webkit-text-stroke:0.7px currentColor;">Completed: 11/16/2024, 3:49:58 PM</div>
<div class="b" style="left:1210px;top:1585px;width:38px;height:16px;background:#141414;"></div>
<div class="b" style="left:1244px;top:1573px;width:844px;height:39.5px;background:#077a4b;border-radius:8px;"></div>
<div class="b" style="left:634px;top:1738px;width:56px;height:54px;background:#0b0e16;border:2px solid #1b2233;box-sizing:border-box;border-radius:8px;"></div>
<svg class="b" style="left:652px;top:1752px;" width="20" height="26" viewBox="652 1752 20 26"><path d="M658 1758.5 L664.5 1765 L658 1771.5" fill="none" stroke="#e8e8e8" stroke-width="2.4"/></svg>
<div class="t" style="left:707.14px;top:1751.20px;font-size:28px;line-height:28px;color:#f4f4f4;letter-spacing:0.470px;-webkit-text-stroke:0.7px currentColor;">wait-a-moment</div>
<div class="b" style="left:915px;top:1737.6px;width:84.5px;height:50.40000000000009px;border:2px solid #4c4c4c;box-sizing:border-box;border-radius:26px;"></div>
<div class="t" style="left:929.00px;top:1750.40px;font-size:24px;line-height:24px;color:#d2d2d2;letter-spacing:-0.340px;-webkit-text-stroke:0.7px currentColor;">sleep</div>
<div class="t" style="left:707.00px;top:1804.20px;font-size:24px;line-height:24px;color:#f4f4f4;letter-spacing:-0.027px;-webkit-text-stroke:0.7px currentColor;">Completed: 11/16/2024, 3:49:58 PM</div>
<div class="b" style="left:1210px;top:1767px;width:4px;height:2px;background:#e0e0e0;"></div>
<div class="b" style="left:1214px;top:1761px;width:42px;height:16px;background:#141414;"></div>
<div class="b" style="left:1253px;top:1749px;width:813px;height:39.5px;background:#077a4b;border-radius:8px;"></div>
<div class="b" style="left:2066px;top:1767px;width:22px;height:2px;background:#f0f0f0;"></div>
<div class="b" style="left:2184px;top:669px;width:756px;height:1120px;border:2px solid #474747;box-sizing:border-box;border-radius:12px;"></div>
<div class="t" style="left:2234.20px;top:701.25px;font-size:27px;line-height:27px;color:#f0f0f0;letter-spacing:0.236px;-webkit-text-stroke:0.7px currentColor;">Trigger details</div>
<svg class="b" style="left:2846px;top:698px;" width="38" height="32" viewBox="2846 698 38 32">
      <rect x="2851" y="712.2" width="10.5" height="3.6" fill="#98a6c0"/>
      <polygon points="2861,702.5 2872.2,714 2861,725.3" fill="#98a6c0"/>
      <rect x="2876" y="702" width="3.3" height="23.8" fill="#98a6c0"/></svg>
<div class="b" style="left:2186px;top:757px;width:752px;height:2px;background:#474747;"></div>
<div class="t" style="left:2234.20px;top:795.10px;font-size:24px;line-height:24px;color:#9a9a9a;letter-spacing:-0.593px;-webkit-text-stroke:0.3px currentColor;">Event name</div>
<div class="t" style="left:2234.20px;top:829.50px;font-size:28px;line-height:28px;color:#f4f4f4;letter-spacing:0.603px;-webkit-text-stroke:0.7px currentColor;">inngest/function.invoked</div>
<div class="t" style="left:2234.20px;top:899.10px;font-size:24px;line-height:24px;color:#9a9a9a;letter-spacing:-0.577px;-webkit-text-stroke:0.3px currentColor;">Event ID</div>
<div class="t" style="left:2234.20px;top:936.12px;font-size:28px;line-height:28px;color:#f4f4f4;font-family:'Liberation Mono', monospace;letter-spacing:-0.060px;-webkit-text-stroke:0.55px currentColor;">01JCVBTMTKNHNHZ3SN64R51BQD</div>
<div class="t" style="left:2234.20px;top:1002.90px;font-size:24px;line-height:24px;color:#9a9a9a;letter-spacing:-0.372px;-webkit-text-stroke:0.3px currentColor;">Received at</div>
<div class="t" style="left:2234.20px;top:1037.70px;font-size:28px;line-height:28px;color:#f4f4f4;letter-spacing:-0.019px;-webkit-text-stroke:0.7px currentColor;">11/16/2024, 3:49:57 PM</div>
<div class="b" style="left:2186px;top:1102.5px;width:752px;height:2.0px;background:#474747;"></div>
<div class="t" style="left:2235.00px;top:1131.20px;font-size:28px;line-height:28px;color:#e2e2e2;letter-spacing:-1.185px;-webkit-text-stroke:0.7px currentColor;">Event</div>
<div class="t" style="left:2235.00px;top:1170.20px;font-size:28px;line-height:28px;color:#e2e2e2;letter-spacing:-0.440px;-webkit-text-stroke:0.7px currentColor;">payload</div>
<div class="b" style="left:2372px;top:1142px;width:255.30000000000018px;height:46px;border:2px solid #4a4a4a;box-sizing:border-box;border-radius:10px;"></div>
<div class="t" style="left:2398.00px;top:1152.40px;font-size:24px;line-height:24px;color:#fafafa;letter-spacing:-0.318px;-webkit-text-stroke:0.7px currentColor;">Send to Dev Server</div>
<div class="b" style="left:2644px;top:1142px;width:109.59999999999991px;height:46px;border:2px solid #4a4a4a;box-sizing:border-box;border-radius:10px;"></div>
<div class="t" style="left:2671.00px;top:1152.40px;font-size:24px;line-height:24px;color:#fafafa;letter-spacing:0.187px;-webkit-text-stroke:0.7px currentColor;">Copy</div>
<div class="b" style="left:2770.5px;top:1142px;width:59.19999999999982px;height:46px;border:2px solid #4a4a4a;box-sizing:border-box;border-radius:10px;"></div>
<svg class="b" style="left:2770px;top:1141px;" width="60" height="48" viewBox="2770 1141 60 48"><g transform="translate(788,-84)">
      <path d="M2001.5 1240.4 L2022 1240.4 M2001.5 1249 L2023 1249 M2001.5 1257.6 L2014.5 1257.6" stroke="#fafafa" stroke-width="3" stroke-linecap="round"/>
      <path d="M2022.5 1244.5 L2027.5 1249 L2022.5 1253.5 Z" fill="#fafafa" stroke="#fafafa" stroke-width="1" stroke-linejoin="round"/></g></svg>
<div class="b" style="left:2846.6px;top:1142px;width:59.09999999999991px;height:46px;border:2px solid #4a4a4a;box-sizing:border-box;border-radius:10px;"></div>
<svg class="b" style="left:2846px;top:1141px;" width="60" height="48" viewBox="2846 1141 60 48"><g transform="translate(787.5,-84)">
      <path d="M2077 1239.5 L2098 1239.5 M2077 1246.6 L2091 1246.6 M2077 1253.4 L2085.5 1253.4" stroke="#fafafa" stroke-width="3" stroke-linecap="round"/>
      <path d="M2097.2 1247 L2097.2 1262 M2091 1256 L2097.2 1262.3 L2103.4 1256" fill="none" stroke="#fafafa" stroke-width="3"/></g></svg>
<div class="b" style="left:2186px;top:1224.5px;width:752px;height:1.5px;background:#333333;"></div>
<div class="b" style="left:2186px;top:1226px;width:752px;height:561px;background:#232323;border-radius:0 0 10px 10px;"></div>
<div class="b" style="left:2918px;top:1226px;width:1.199999999999818px;height:561px;background:#3a3a3a;"></div>
<div class="b" style="left:0;top:0;width:3054px;height:1787px;overflow:hidden;">
<div class="t" style="left:2247.80px;top:1261.94px;font-size:26px;line-height:26px;color:#d9d9d9;font-family:'Liberation Mono', monospace;transform:scaleY(1.09);transform-origin:0 19.76px;-webkit-text-stroke:0.5px currentColor;">1</div>
<div class="t" style="left:2316.5px;top:1261.94px;font-family:'Liberation Mono',monospace;font-size:26px;line-height:26px;transform:scaleY(1.09);transform-origin:0 19.76px;-webkit-text-stroke:0.5px currentColor;"><span style="color:#d9d9d9">{</span></div>
<div class="t" style="left:2247.80px;top:1313.94px;font-size:26px;line-height:26px;color:#d9d9d9;font-family:'Liberation Mono', monospace;transform:scaleY(1.09);transform-origin:0 19.76px;-webkit-text-stroke:0.5px currentColor;">2</div>
<div class="t" style="left:2316.5px;top:1313.94px;font-family:'Liberation Mono',monospace;font-size:26px;line-height:26px;transform:scaleY(1.09);transform-origin:0 19.76px;-webkit-text-stroke:0.5px currentColor;"><span style="color:#d9d9d9">  </span><span style="color:#907efb">&quot;name&quot;</span><span style="color:#d9d9d9">: </span><span style="color:#6ec991">&quot;inngest/function.invoked&quot;</span><span style="color:#d9d9d9">,</span></div>
<div class="t" style="left:2247.80px;top:1365.94px;font-size:26px;line-height:26px;color:#d9d9d9;font-family:'Liberation Mono', monospace;transform:scaleY(1.09);transform-origin:0 19.76px;-webkit-text-stroke:0.5px currentColor;">3</div>
<div class="t" style="left:2316.5px;top:1365.94px;font-family:'Liberation Mono',monospace;font-size:26px;line-height:26px;transform:scaleY(1.09);transform-origin:0 19.76px;-webkit-text-stroke:0.5px currentColor;"><span style="color:#d9d9d9">  </span><span style="color:#907efb">&quot;data&quot;</span><span style="color:#d9d9d9">: {</span></div>
<div class="t" style="left:2247.80px;top:1417.94px;font-size:26px;line-height:26px;color:#d9d9d9;font-family:'Liberation Mono', monospace;transform:scaleY(1.09);transform-origin:0 19.76px;-webkit-text-stroke:0.5px currentColor;">4</div>
<div class="t" style="left:2316.5px;top:1417.94px;font-family:'Liberation Mono',monospace;font-size:26px;line-height:26px;transform:scaleY(1.09);transform-origin:0 19.76px;-webkit-text-stroke:0.5px currentColor;"><span style="color:#d9d9d9">    </span><span style="color:#907efb">&quot;_inngest&quot;</span><span style="color:#d9d9d9">: {</span></div>
<div class="t" style="left:2247.80px;top:1469.94px;font-size:26px;line-height:26px;color:#d9d9d9;font-family:'Liberation Mono', monospace;transform:scaleY(1.09);transform-origin:0 19.76px;-webkit-text-stroke:0.5px currentColor;">5</div>
<div class="t" style="left:2316.5px;top:1469.94px;font-family:'Liberation Mono',monospace;font-size:26px;line-height:26px;transform:scaleY(1.09);transform-origin:0 19.76px;-webkit-text-stroke:0.5px currentColor;"><span style="color:#d9d9d9">      </span><span style="color:#907efb">&quot;expire&quot;</span><span style="color:#d9d9d9">: </span><span style="color:#f4a62a">0</span><span style="color:#d9d9d9">,</span></div>
<div class="t" style="left:2247.80px;top:1521.94px;font-size:26px;line-height:26px;color:#d9d9d9;font-family:'Liberation Mono', monospace;transform:scaleY(1.09);transform-origin:0 19.76px;-webkit-text-stroke:0.5px currentColor;">6</div>
<div class="t" style="left:2316.5px;top:1521.94px;font-family:'Liberation Mono',monospace;font-size:26px;line-height:26px;transform:scaleY(1.09);transform-origin:0 19.76px;-webkit-text-stroke:0.5px currentColor;"><span style="color:#d9d9d9">      </span><span style="color:#907efb">&quot;fn_id&quot;</span><span style="color:#d9d9d9">: </span><span style="color:#6ec991">&quot;my-app-hello-world&quot;</span><span style="color:#d9d9d9">,</span></div>
<div class="t" style="left:2247.80px;top:1573.94px;font-size:26px;line-height:26px;color:#d9d9d9;font-family:'Liberation Mono', monospace;transform:scaleY(1.09);transform-origin:0 19.76px;-webkit-text-stroke:0.5px currentColor;">7</div>
<div class="t" style="left:2316.5px;top:1573.94px;font-family:'Liberation Mono',monospace;font-size:26px;line-height:26px;transform:scaleY(1.09);transform-origin:0 19.76px;-webkit-text-stroke:0.5px currentColor;"><span style="color:#d9d9d9">      </span><span style="color:#907efb">&quot;gid&quot;</span><span style="color:#d9d9d9">: </span><span style="color:#6ec991">&quot;&quot;</span><span style="color:#d9d9d9">,</span></div>
<div class="t" style="left:2247.80px;top:1625.94px;font-size:26px;line-height:26px;color:#d9d9d9;font-family:'Liberation Mono', monospace;transform:scaleY(1.09);transform-origin:0 19.76px;-webkit-text-stroke:0.5px currentColor;">8</div>
<div class="t" style="left:2316.5px;top:1625.94px;font-family:'Liberation Mono',monospace;font-size:26px;line-height:26px;transform:scaleY(1.09);transform-origin:0 19.76px;-webkit-text-stroke:0.5px currentColor;"><span style="color:#d9d9d9">      </span><span style="color:#907efb">&quot;name&quot;</span><span style="color:#d9d9d9">: </span><span style="color:#6ec991">&quot;&quot;</span><span style="color:#d9d9d9">,</span></div>
<div class="t" style="left:2247.80px;top:1677.94px;font-size:26px;line-height:26px;color:#d9d9d9;font-family:'Liberation Mono', monospace;transform:scaleY(1.09);transform-origin:0 19.76px;-webkit-text-stroke:0.5px currentColor;">9</div>
<div class="t" style="left:2316.5px;top:1677.94px;font-family:'Liberation Mono',monospace;font-size:26px;line-height:26px;transform:scaleY(1.09);transform-origin:0 19.76px;-webkit-text-stroke:0.5px currentColor;"><span style="color:#d9d9d9">      </span><span style="color:#907efb">&quot;source_app_id&quot;</span><span style="color:#d9d9d9">: </span><span style="color:#6ec991">&quot;&quot;</span><span style="color:#d9d9d9">,</span></div>
<div class="t" style="left:2232.20px;top:1729.94px;font-size:26px;line-height:26px;color:#d9d9d9;font-family:'Liberation Mono', monospace;transform:scaleY(1.09);transform-origin:0 19.76px;-webkit-text-stroke:0.5px currentColor;">10</div>
<div class="t" style="left:2316.5px;top:1729.94px;font-family:'Liberation Mono',monospace;font-size:26px;line-height:26px;transform:scaleY(1.09);transform-origin:0 19.76px;-webkit-text-stroke:0.5px currentColor;"><span style="color:#d9d9d9">      </span><span style="color:#907efb">&quot;source_fn_id&quot;</span><span style="color:#d9d9d9">: </span><span style="color:#6ec991">&quot;&quot;</span><span style="color:#d9d9d9">,</span></div>
<div class="t" style="left:2232.20px;top:1781.94px;font-size:26px;line-height:26px;color:#d9d9d9;font-family:'Liberation Mono', monospace;transform:scaleY(1.09);transform-origin:0 19.76px;-webkit-text-stroke:0.5px currentColor;">11</div>
<div class="t" style="left:2316.5px;top:1781.94px;font-family:'Liberation Mono',monospace;font-size:26px;line-height:26px;transform:scaleY(1.09);transform-origin:0 19.76px;-webkit-text-stroke:0.5px currentColor;"><span style="color:#d9d9d9">      </span><span style="color:#907efb">&quot;source_fn_v&quot;</span><span style="color:#d9d9d9">: </span><span style="color:#f4a62a">0</span><span style="color:#d9d9d9">,</span></div>
</div>
</body></html>
